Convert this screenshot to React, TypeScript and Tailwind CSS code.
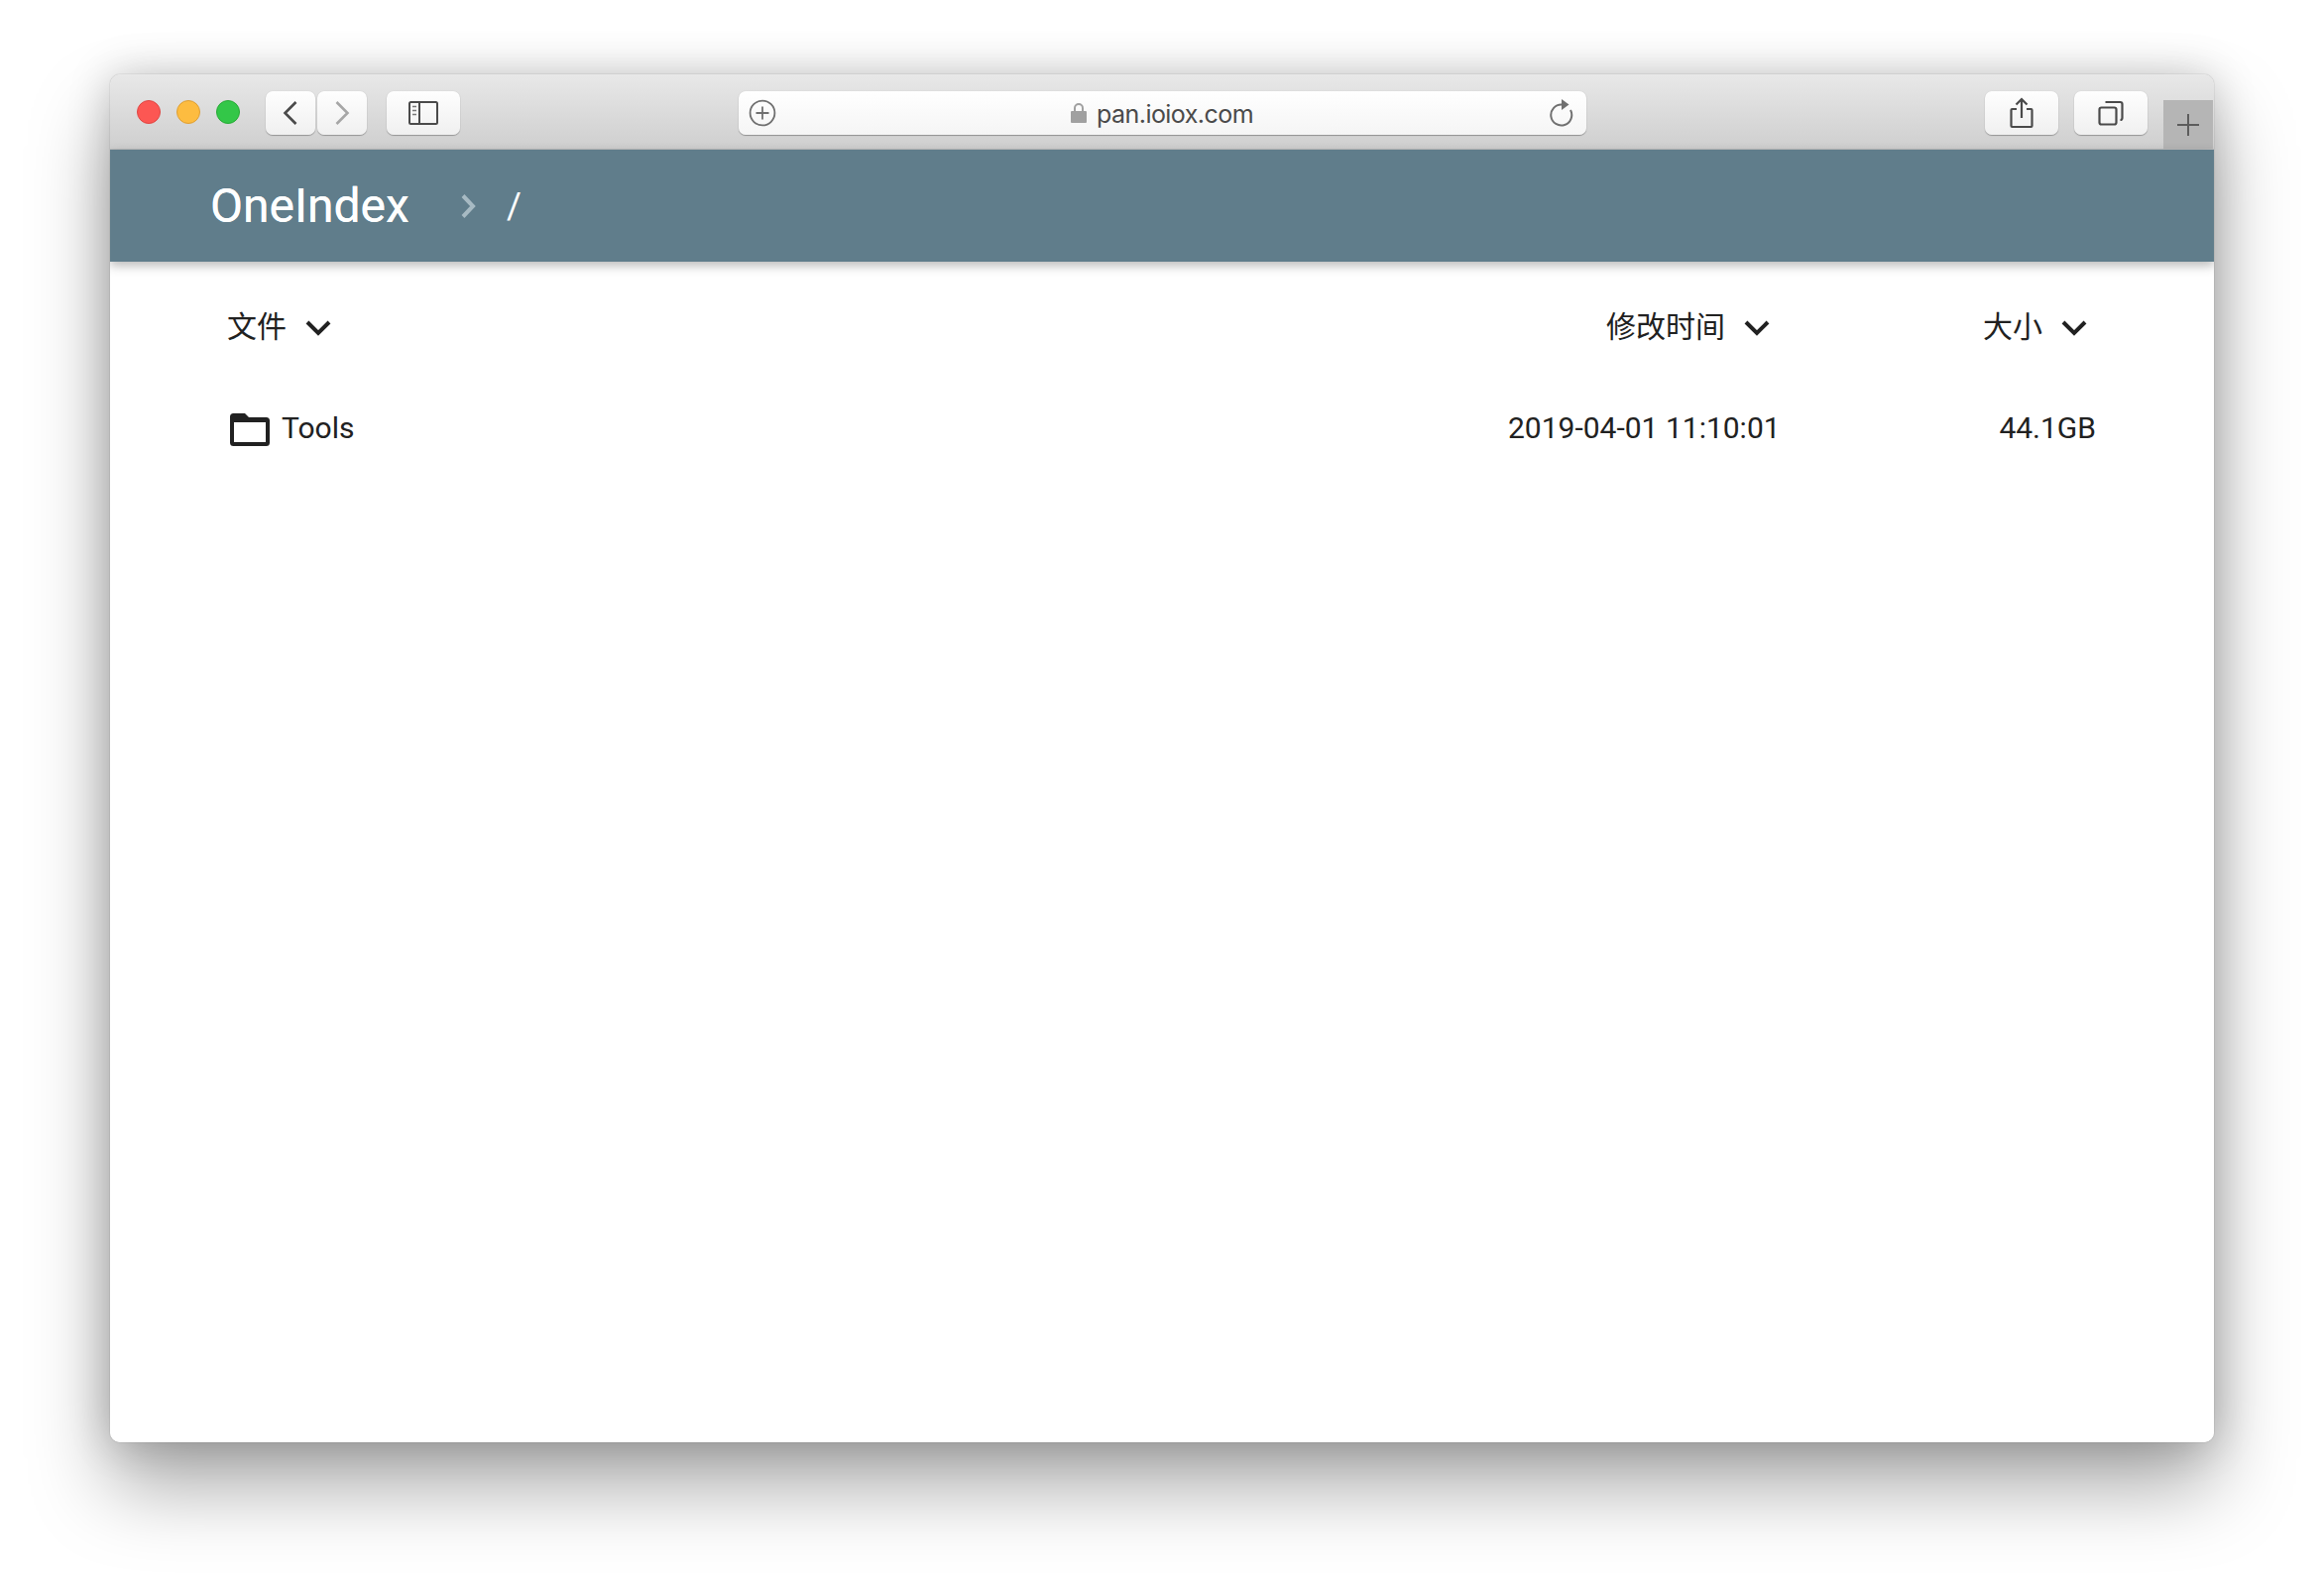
const Chev = () => (
  <svg width="32" height="32" viewBox="0 0 32 32" className="ml-[16px] mr-[6px] mt-[2px] shrink-0" fill="none" stroke="#212121" strokeWidth="4">
    <path d="M5 11 16 22 27 11" />
  </svg>
);

const TB = ({ w, className = "", children }: { w: string; className?: string; children: React.ReactNode }) => (
  <div className={`${w} h-[44px] rounded-[7px] bg-gradient-to-b from-[#fefefe] to-[#f0f0f0] shadow-[0_1px_1px_rgba(0,0,0,0.28),0_0_1px_rgba(0,0,0,0.2)] flex items-center justify-center shrink-0 ${className}`}>
    {children}
  </div>
);

export default function App() {
  return (
    <div className="w-[2344px] h-[1602px] bg-white pl-[111px] pt-[75px] overflow-hidden font-['Roboto','Noto_Sans_CJK_SC',sans-serif]">
      <div className="w-[2122px] h-[1380px] rounded-[10px] bg-white flex flex-col overflow-hidden shadow-[0_44px_80px_rgba(0,0,0,0.34),0_0_44px_rgba(0,0,0,0.2),0_0_1px_rgba(0,0,0,0.5)]">
        <div className="h-[76px] shrink-0 flex items-start bg-gradient-to-b from-[#e8e8e8] to-[#cfcfcf] border-b border-[#bdbdbd] relative">
          <div className="flex items-center gap-[16px] pl-[27px] pt-[26px]">
            <span className="w-[24px] h-[24px] rounded-full bg-[#fc5753] border border-[#df4744]" />
            <span className="w-[24px] h-[24px] rounded-full bg-[#fdbc40] border border-[#de9f34]" />
            <span className="w-[24px] h-[24px] rounded-full bg-[#33c748] border border-[#27aa35]" />
          </div>
          <div className="flex pl-[26px] pt-[17px] gap-[2px]">
            <TB w="w-[50px]">
              <svg width="16" height="26" viewBox="0 0 16 26" fill="none" stroke="#4a4a4a" strokeWidth="2.6"><path d="M13.5 2 2.5 13l11 11" /></svg>
            </TB>
            <TB w="w-[50px]">
              <svg width="16" height="26" viewBox="0 0 16 26" fill="none" stroke="#a6a6a6" strokeWidth="2.6"><path d="M2.5 2l11 11-11 11" /></svg>
            </TB>
          </div>
          <div className="pl-[20px] pt-[17px]">
            <TB w="w-[74px]">
              <svg width="30" height="24" viewBox="0 0 30 24" fill="none" stroke="#4a4a4a" strokeWidth="2">
                <rect x="1" y="1" width="28" height="22" rx="1.5" />
                <path d="M11 1v22" />
                <path d="M4 5.5h4M4 9.5h4M4 13.5h4" strokeWidth="1.6" stroke="#777" />
              </svg>
            </TB>
          </div>
          <div className="ml-[281px] mt-[17px] w-[855px] h-[44px] rounded-[7px] bg-gradient-to-b from-[#ffffff] to-[#f5f5f5] shadow-[0_1px_1px_rgba(0,0,0,0.3),0_0_1px_rgba(0,0,0,0.2)] flex items-center justify-between pl-[10px] pr-[13px] shrink-0">
            <svg width="28" height="28" viewBox="0 0 28 28" fill="none" stroke="#707070" strokeWidth="1.8">
              <circle cx="14" cy="14" r="12.4" />
              <path d="M14 7.5v13M7.5 14h13" />
            </svg>
            <div className="flex items-center gap-[10px] text-[#4a4a4a] text-[25px] leading-[44px] font-['Inter','Roboto',sans-serif] tracking-[-0.55px] pt-[2px]">
              <svg width="16" height="22" viewBox="0 0 16 22" className="mt-[-2px]">
                <path d="M4 10V6a4 4 0 0 1 8 0v4" fill="none" stroke="#a0a0a0" strokeWidth="2" />
                <rect x="0" y="9" width="16" height="12" rx="1" fill="#a0a0a0" />
              </svg>
              <span>pan.ioiox.com</span>
            </div>
            <svg width="26" height="30" viewBox="0 0 26 30" fill="none" stroke="#707070" strokeWidth="2">
              <path d="M14 6.500A10.500 10.500 0 1 0 23 12" />
              <path d="M14 1 21.500 6.500 14 12z" fill="#707070" stroke="none" />
            </svg>
          </div>
          <div className="ml-[402px] pt-[17px]">
            <TB w="w-[74px]">
              <svg width="24" height="32" viewBox="0 0 24 32" fill="none" stroke="#4a4a4a" strokeWidth="2.2">
                <path d="M7 12H2.500a1 1 0 0 0-1 1v16a1 1 0 0 0 1 1h19a1 1 0 0 0 1-1V13a1 1 0 0 0-1-1H17" />
                <path d="M12 21V2M6.500 7.500 12 2l5.500 5.500" />
              </svg>
            </TB>
          </div>
          <div className="ml-[16px] pt-[17px]">
            <TB w="w-[74px]">
              <svg width="26" height="26" viewBox="0 0 26 26" fill="none" stroke="#4a4a4a" strokeWidth="2.2">
                <rect x="1.500" y="7.500" width="17" height="17" rx="2" />
                <path d="M7.500 2h15a2 2 0 0 1 2 2v14a2 2 0 0 1-2 2" />
              </svg>
            </TB>
          </div>
          <div className="ml-[16px] mt-[26px] w-[50px] h-[49px] bg-[#b5b5b5] flex items-center justify-center">
            <svg width="24" height="24" viewBox="0 0 24 24" stroke="#5c5c5c" strokeWidth="2"><path d="M12 1v22M1 12h22" /></svg>
          </div>
        </div>
        <header className="h-[113px] shrink-0 bg-[#607d8b] flex items-center pl-[101px] text-white shadow-[0_4px_10px_rgba(0,0,0,0.28)] relative">
          <span className="text-[48px] leading-none font-normal [text-shadow:0_0_0.5px_#fff]">OneIndex</span>
          <svg width="18" height="28" viewBox="0 0 18 28" fill="none" stroke="#a7bac3" strokeWidth="4" className="ml-[51px]"><path d="M3 3.500 13 14 3 24.500" /></svg>
          <span className="text-[36px] leading-none ml-[29px]">/</span>
        </header>
        <main className="flex-1 bg-white text-[#212121] text-[30px] pl-[118px] pr-[119px]">
          <div className="flex items-center h-[48px] mt-[41px]">
            <div className="flex-1 flex items-center">
              <span>文件</span>
              <Chev />
            </div>
            <div className="w-[273px] mr-[320px] flex items-center justify-end">
              <span>修改时间</span>
              <Chev />
            </div>
            <div className="w-[0px] flex items-center justify-end">
              <span className="shrink-0">大小</span>
              <Chev />
            </div>
          </div>
          <div className="flex items-center h-[48px] mt-[54px]">
            <div className="flex-1 flex items-center">
              <svg width="40" height="33" viewBox="0 0 40 33" className="ml-[3px] mt-[5px] shrink-0" fill="#212121">
                <path fillRule="evenodd" d="M3.500 0H15l4 4h17.500A3.500 3.500 0 0 1 40 7.500v22a3.500 3.500 0 0 1-3.500 3.500h-33A3.500 3.500 0 0 1 0 29.500v-26A3.500 3.500 0 0 1 3.500 0zM4 9v20h32V9z" />
              </svg>
              <span className="ml-[12px]">Tools</span>
            </div>
            <div className="w-[273px] mr-[320px] text-right whitespace-nowrap">2019-04-01 11:10:01</div>
            <div className="w-[0px] flex justify-end whitespace-nowrap">44.1GB</div>
          </div>
        </main>
      </div>
    </div>
  );
}
